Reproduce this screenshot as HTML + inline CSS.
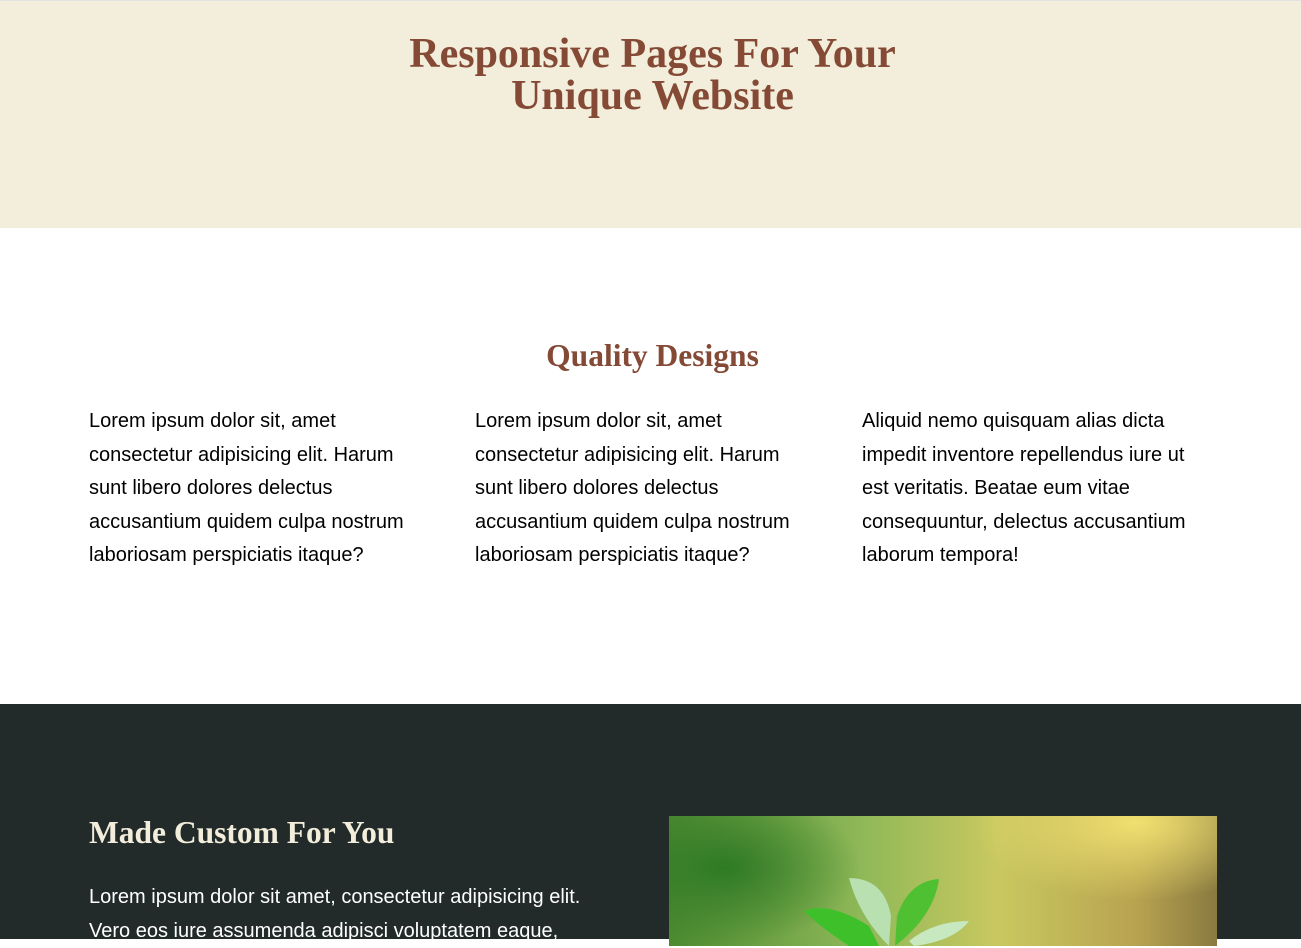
<!DOCTYPE html>
<html><head><style>
body{margin:0;width:1301px;height:939px;overflow:hidden;font-family:"Liberation Sans",sans-serif;}
.hero{background:#f3eddb;height:227px;border-top:1px solid #e2e2e2;position:relative;}
.hero h1{position:absolute;top:32px;left:0;width:100%;margin:0;text-align:center;font-family:"Liberation Serif",serif;font-weight:bold;font-size:42px;line-height:42px;color:#844a35;padding-left:4px;box-sizing:border-box;}
.q{height:476px;position:relative;}
.q h2{position:absolute;margin:0;top:110px;width:100%;text-align:center;font-family:"Liberation Serif",serif;font-size:31.5px;color:#844a35;padding-left:4px;box-sizing:border-box;}
.col{position:absolute;top:177px;width:332px;font-size:20px;line-height:33.5px;color:#000;}
.d{background:#222a2a;height:235px;position:relative;}
.d h3{position:absolute;left:89px;top:111px;margin:0;font-family:"Liberation Serif",serif;font-size:31.5px;color:#f3eddb;}
.d p{position:absolute;left:89px;top:177px;margin:0;width:525px;font-size:20px;line-height:33.5px;color:#fff;}
.img{position:absolute;left:669px;top:112px;width:548px;height:130px;overflow:hidden;
background:radial-gradient(ellipse 30% 60% at 85% 5%,#f0e070,transparent),radial-gradient(ellipse 25% 60% at 10% 40%,#2f7a25,transparent),linear-gradient(90deg,#4c8a30,#8fb858 35%,#c9c860 60%,#b8a450 85%,#8a7a40);}
</style></head><body>
<div class="hero"><h1>Responsive Pages For Your<br>Unique Website</h1></div>
<div class="q"><h2>Quality Designs</h2>
<div class="col" style="left:89px">Lorem ipsum dolor sit, amet consectetur adipisicing elit. Harum sunt libero dolores delectus accusantium quidem culpa nostrum laboriosam perspiciatis itaque?</div>
<div class="col" style="left:475px">Lorem ipsum dolor sit, amet consectetur adipisicing elit. Harum sunt libero dolores delectus accusantium quidem culpa nostrum laboriosam perspiciatis itaque?</div>
<div class="col" style="left:862px;width:345px">Aliquid nemo quisquam alias dicta impedit inventore repellendus iure ut est veritatis. Beatae eum vitae consequuntur, delectus accusantium laborum tempora!</div>
</div>
<div class="d"><h3>Made Custom For You</h3>
<p>Lorem ipsum dolor sit amet, consectetur adipisicing elit. Vero eos iure assumenda adipisci voluptatem eaque,</p>
<div class="img"><svg width="548" height="130" style="position:absolute;left:0;top:0">
<path d="M135 95 Q160 85 200 110 L210 130 L180 130 Q150 110 135 95Z" fill="#3ec02a"/>
<path d="M180 62 Q215 62 222 100 L220 130 Q190 100 180 62Z" fill="#b8e0b0"/>
<path d="M270 63 Q240 65 228 100 L226 130 Q265 100 270 63Z" fill="#4fc032"/>
<path d="M300 105 Q265 105 240 125 L245 130 Q285 125 300 105Z" fill="#c8e8c0"/>
</svg></div>
</div>
</body></html>
